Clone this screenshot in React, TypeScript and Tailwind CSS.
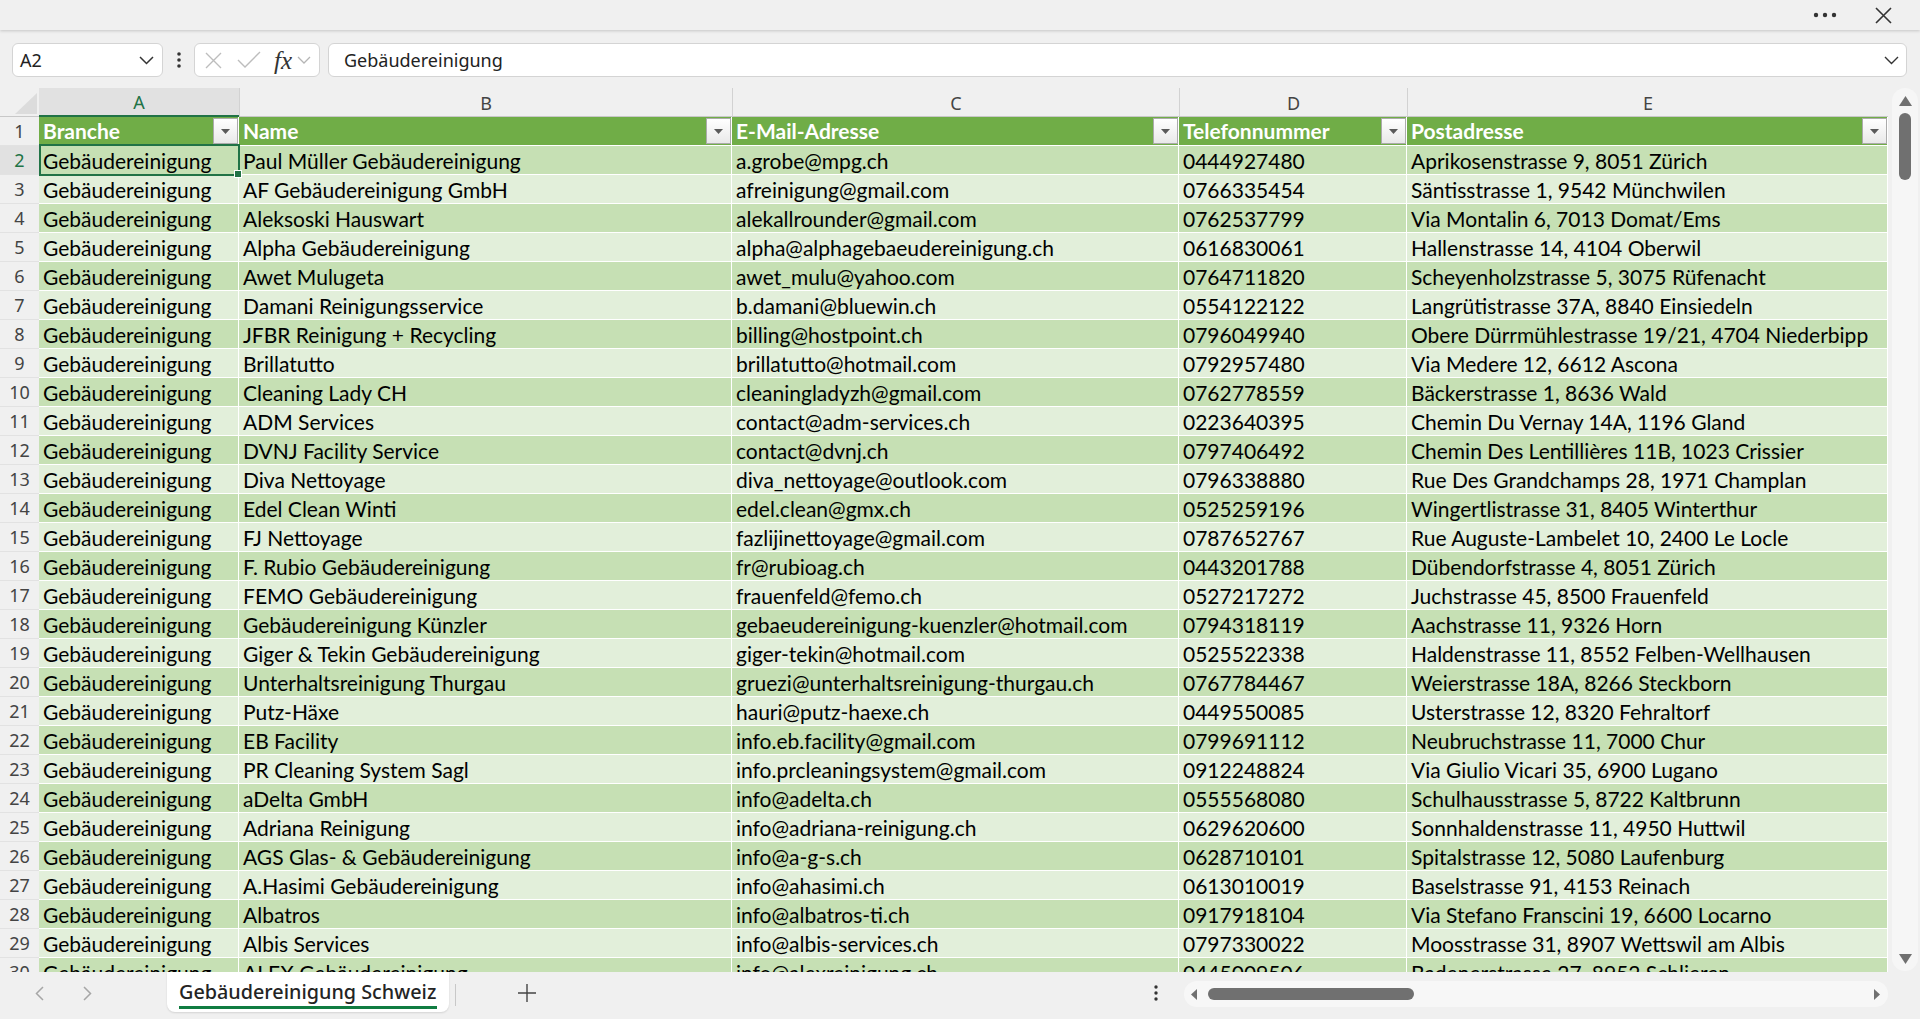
import React from "react";

const rows: [string, string, string, string][] = [
  ["Paul Müller Gebäudereinigung", "a.grobe@mpg.ch", "0444927480", "Aprikosenstrasse 9, 8051 Zürich"],
  ["AF Gebäudereinigung GmbH", "afreinigung@gmail.com", "0766335454", "Säntisstrasse 1, 9542 Münchwilen"],
  ["Aleksoski Hauswart", "alekallrounder@gmail.com", "0762537799", "Via Montalin 6, 7013 Domat/Ems"],
  ["Alpha Gebäudereinigung", "alpha@alphagebaeudereinigung.ch", "0616830061", "Hallenstrasse 14, 4104 Oberwil"],
  ["Awet Mulugeta", "awet_mulu@yahoo.com", "0764711820", "Scheyenholzstrasse 5, 3075 Rüfenacht"],
  ["Damani Reinigungsservice", "b.damani@bluewin.ch", "0554122122", "Langrütistrasse 37A, 8840 Einsiedeln"],
  ["JFBR Reinigung + Recycling", "billing@hostpoint.ch", "0796049940", "Obere Dürrmühlestrasse 19/21, 4704 Niederbipp"],
  ["Brillatutto", "brillatutto@hotmail.com", "0792957480", "Via Medere 12, 6612 Ascona"],
  ["Cleaning Lady CH", "cleaningladyzh@gmail.com", "0762778559", "Bäckerstrasse 1, 8636 Wald"],
  ["ADM Services", "contact@adm-services.ch", "0223640395", "Chemin Du Vernay 14A, 1196 Gland"],
  ["DVNJ Facility Service", "contact@dvnj.ch", "0797406492", "Chemin Des Lentillières 11B, 1023 Crissier"],
  ["Diva Nettoyage", "diva_nettoyage@outlook.com", "0796338880", "Rue Des Grandchamps 28, 1971 Champlan"],
  ["Edel Clean Winti", "edel.clean@gmx.ch", "0525259196", "Wingertlistrasse 31, 8405 Winterthur"],
  ["FJ Nettoyage", "fazlijinettoyage@gmail.com", "0787652767", "Rue Auguste-Lambelet 10, 2400 Le Locle"],
  ["F. Rubio Gebäudereinigung", "fr@rubioag.ch", "0443201788", "Dübendorfstrasse 4, 8051 Zürich"],
  ["FEMO Gebäudereinigung", "frauenfeld@femo.ch", "0527217272", "Juchstrasse 45, 8500 Frauenfeld"],
  ["Gebäudereinigung Künzler", "gebaeudereinigung-kuenzler@hotmail.com", "0794318119", "Aachstrasse 11, 9326 Horn"],
  ["Giger & Tekin Gebäudereinigung", "giger-tekin@hotmail.com", "0525522338", "Haldenstrasse 11, 8552 Felben-Wellhausen"],
  ["Unterhaltsreinigung Thurgau", "gruezi@unterhaltsreinigung-thurgau.ch", "0767784467", "Weierstrasse 18A, 8266 Steckborn"],
  ["Putz-Häxe", "hauri@putz-haexe.ch", "0449550085", "Usterstrasse 12, 8320 Fehraltorf"],
  ["EB Facility", "info.eb.facility@gmail.com", "0799691112", "Neubruchstrasse 11, 7000 Chur"],
  ["PR Cleaning System Sagl", "info.prcleaningsystem@gmail.com", "0912248824", "Via Giulio Vicari 35, 6900 Lugano"],
  ["aDelta GmbH", "info@adelta.ch", "0555568080", "Schulhausstrasse 5, 8722 Kaltbrunn"],
  ["Adriana Reinigung", "info@adriana-reinigung.ch", "0629620600", "Sonnhaldenstrasse 11, 4950 Huttwil"],
  ["AGS Glas- & Gebäudereinigung", "info@a-g-s.ch", "0628710101", "Spitalstrasse 12, 5080 Laufenburg"],
  ["A.Hasimi Gebäudereinigung", "info@ahasimi.ch", "0613010019", "Baselstrasse 91, 4153 Reinach"],
  ["Albatros", "info@albatros-ti.ch", "0917918104", "Via Stefano Franscini 19, 6600 Locarno"],
  ["Albis Services", "info@albis-services.ch", "0797330022", "Moosstrasse 31, 8907 Wettswil am Albis"],
  ["ALEX Gebäudereinigung", "info@alexreinigung.ch", "0445009506", "Badenerstrasse 27, 8952 Schlieren"],
];

const cellFont = { fontFamily: "Lato, 'Noto Sans', sans-serif" };
const uiFont = { fontFamily: "'Noto Sans', 'Open Sans', sans-serif" };

function FilterBtn() {
  return (
    <div className="absolute right-0 top-[1px] w-[25px] h-[26px] border border-[#ababab] bg-linear-to-b from-white to-[#e9e9e9] flex items-center justify-center">
      <svg width="9" height="5" viewBox="0 0 9 5">
        <path d="M0 0 H9 L4.5 5 Z" fill="#5a5a5a" />
      </svg>
    </div>
  );
}

function HeaderCell({ text }: { text: string }) {
  return (
    <div className="relative h-[29px] bg-[#70ad47] border-r border-b border-white pl-[4px] text-white font-bold text-[21px] leading-[28px] whitespace-nowrap overflow-hidden" style={cellFont}>
      {text}
      <FilterBtn />
    </div>
  );
}

export default function App() {
  const letters = ["A", "B", "C", "D", "E"];
  const heads = ["Branche", "Name", "E-Mail-Adresse", "Telefonnummer", "Postadresse"];
  return (
    <div className="w-[1920px] h-[1019px] bg-[#f0f0f0] flex flex-col overflow-hidden">
      {/* top bar */}
      <div className="h-[30px] shrink-0 bg-[#f0f0f0] flex items-center justify-end pr-[28px] shadow-[0_1px_3px_rgba(0,0,0,0.18)] relative z-10">
        <svg width="26" height="6" viewBox="0 0 26 6" className="mr-[37px]">
          <circle cx="4" cy="3" r="2.2" fill="#333" />
          <circle cx="13" cy="3" r="2.2" fill="#333" />
          <circle cx="22" cy="3" r="2.2" fill="#333" />
        </svg>
        <svg width="17" height="17" viewBox="0 0 17 17">
          <path d="M1 1 L16 16 M16 1 L1 16" stroke="#333" strokeWidth="1.6" />
        </svg>
      </div>

      {/* formula bar */}
      <div className="h-[34px] mt-[13px] shrink-0 flex items-center pl-[12px]" style={uiFont}>
        <div className="w-[151px] h-[34px] bg-white border border-[#d4d4d4] rounded-[6px] flex items-center justify-between pl-[7px] pr-[8px]">
          <span className="text-[18px] text-[#222]">A2</span>
          <svg width="15" height="9" viewBox="0 0 15 9">
            <path d="M1 1 L7.5 7.5 L14 1" stroke="#333" strokeWidth="1.5" fill="none" />
          </svg>
        </div>
        <svg width="4" height="16" viewBox="0 0 4 16" className="ml-[14px]">
          <circle cx="2" cy="2" r="1.8" fill="#333" />
          <circle cx="2" cy="8" r="1.8" fill="#333" />
          <circle cx="2" cy="14" r="1.8" fill="#333" />
        </svg>
        <div className="ml-[13px] w-[126px] h-[34px] bg-white border border-[#d4d4d4] rounded-[6px] flex items-center pl-[9px]">
          <svg width="19" height="19" viewBox="0 0 19 19">
            <path d="M2 2 L17 17 M17 2 L2 17" stroke="#bdbdbd" strokeWidth="1.4" />
          </svg>
          <svg width="24" height="18" viewBox="0 0 24 18" className="ml-[14px]">
            <path d="M1 9 L8 16 L23 1" stroke="#bdbdbd" strokeWidth="1.4" fill="none" />
          </svg>
          <span className="ml-[13px] text-[25px] italic text-[#333] leading-none" style={{ fontFamily: "'Liberation Serif', 'DejaVu Serif', serif" }}>
            fx
          </span>
          <svg width="14" height="8" viewBox="0 0 14 8" className="ml-[5px]">
            <path d="M1 1 L7 7 L13 1" stroke="#b5b5b5" strokeWidth="1.3" fill="none" />
          </svg>
        </div>
        <div className="ml-[8px] mr-[13px] flex-1 h-[34px] bg-white border border-[#d4d4d4] rounded-[6px] flex items-center justify-between pl-[15px] pr-[7px]">
          <span className="text-[18px] text-[#222]">Gebäudereinigung</span>
          <svg width="15" height="9" viewBox="0 0 15 9">
            <path d="M1 1 L7.5 7.5 L14 1" stroke="#333" strokeWidth="1.4" fill="none" />
          </svg>
        </div>
      </div>

      {/* grid area */}
      <div className="mt-[11px] flex-1 min-h-0 flex">
        <div className="relative w-[1888px] overflow-hidden">
          <div className="grid grid-cols-[39px_200px_493px_447px_228px_481px]">
            {/* column header row */}
            <div className="relative h-[29px] border-b border-[#c8c8c8]">
              <svg width="22" height="21" viewBox="0 0 22 21" className="absolute left-[15px] top-[5px]">
                <path d="M22 0 L22 21 L0 21 Z" fill="#dcdcdc" />
              </svg>
            </div>
            {letters.map((l, i) => (
              <div
                key={l}
                className={
                  i === 0
                    ? "h-[29px] bg-[#e1e1e1] border-b-2 border-[#217346] flex items-center justify-center text-[18px] text-[#217346] pt-[2px]"
                    : "h-[29px] border-b border-l border-[#d2d2d2] border-b-[#c8c8c8] flex items-center justify-center text-[18px] text-[#444] pt-[2px]"
                }
                style={uiFont}
              >
                {l}
              </div>
            ))}

            {/* row 1 */}
            <div className="h-[29px] border-b border-[#e2e2e2] flex items-center justify-center text-[18px] text-[#444]" style={uiFont}>
              1
            </div>
            {heads.map((h) => (
              <HeaderCell key={h} text={h} />
            ))}

            {rows.map((r, idx) => {
              const n = idx + 2;
              const bg = idx % 2 === 0 ? "bg-[#c6e0b4]" : "bg-[#e2efda]";
              const sel = n === 2;
              const cells = ["Gebäudereinigung", ...r];
              return (
                <React.Fragment key={n}>
                  <div
                    className={
                      sel
                        ? "h-[29px] bg-[#e1e1e1] border-b border-[#e2e2e2] flex items-center justify-center text-[18px] text-[#217346]"
                        : "h-[29px] border-b border-[#e2e2e2] flex items-center justify-center text-[18px] text-[#444]"
                    }
                    style={uiFont}
                  >
                    {n}
                  </div>
                  {cells.map((c, ci) => (
                    <div
                      key={ci}
                      className={`h-[29px] ${bg} border-r border-b border-white pl-[4px] pt-[1px] text-[21px] leading-[27px] text-black whitespace-nowrap overflow-hidden`}
                      style={cellFont}
                    >
                      {c}
                    </div>
                  ))}
                </React.Fragment>
              );
            })}
          </div>
          {/* selection */}
          <div className="absolute left-[39px] top-[56px] w-[201px] h-[32px] border-2 border-[#217346] pointer-events-none" />
          <div className="absolute left-[234px] top-[82px] w-[8px] h-[8px] bg-[#217346] border border-white" />
        </div>
        {/* vertical scrollbar */}
        <div className="ml-[4px] w-[26px] h-[883px] rounded-full bg-[#f6f6f6] flex flex-col items-center pt-[8px] pb-[7px]">
          <svg width="13" height="10" viewBox="0 0 13 10">
            <path d="M6.5 0 L13 10 H0 Z" fill="#707070" />
          </svg>
          <div className="mt-[7px] w-[12px] h-[67px] rounded-full bg-[#707070]" />
          <div className="flex-1" />
          <svg width="13" height="10" viewBox="0 0 13 10">
            <path d="M0 0 H13 L6.5 10 Z" fill="#707070" />
          </svg>
        </div>
      </div>

      {/* bottom bar */}
      <div className="h-[47px] shrink-0 flex items-start" style={uiFont}>
        <div className="w-[167px] h-[42px] flex items-center pl-[35px]">
          <svg width="9" height="15" viewBox="0 0 9 15">
            <path d="M8 1 L1.5 7.5 L8 14" stroke="#a6a6a6" strokeWidth="1.5" fill="none" />
          </svg>
          <svg width="9" height="15" viewBox="0 0 9 15" className="ml-[39px]">
            <path d="M1 1 L7.5 7.5 L1 14" stroke="#a6a6a6" strokeWidth="1.5" fill="none" />
          </svg>
        </div>
        <div className="w-[282px] h-[40px] bg-white rounded-b-[8px] shadow-[0_1px_2px_rgba(0,0,0,0.12)] px-[12px] flex flex-col">
          <span className="text-[19.8px] leading-[26px] mt-[7px] text-[#242424] font-medium whitespace-nowrap">Gebäudereinigung Schweiz</span>
          <div className="h-[3px] bg-[#107c41] mt-[1px] w-[258px]" />
        </div>
        <div className="ml-[6px] mt-[12px] w-px h-[22px] bg-[#c8c8c8]" />
        <svg width="20" height="20" viewBox="0 0 20 20" className="ml-[61px] mt-[11px]">
          <path d="M10 1 V19 M1 10 H19" stroke="#444" strokeWidth="1.4" />
        </svg>
        <div className="flex-1" />
        <svg width="4" height="16" viewBox="0 0 4 16" className="mt-[13px]">
          <circle cx="2" cy="2" r="1.7" fill="#333" />
          <circle cx="2" cy="8" r="1.7" fill="#333" />
          <circle cx="2" cy="14" r="1.7" fill="#333" />
        </svg>
        <div className="ml-[26px] mr-[32px] mt-[9px] w-[704px] h-[26px] rounded-full bg-[#f7f7f7] flex items-center pl-[7px] pr-[8px]">
          <svg width="6" height="11" viewBox="0 0 6 11">
            <path d="M6 0 V11 L0 5.5 Z" fill="#707070" />
          </svg>
          <div className="ml-[11px] w-[206px] h-[12px] rounded-full bg-[#707070]" />
          <div className="flex-1" />
          <svg width="6" height="11" viewBox="0 0 6 11">
            <path d="M0 0 V11 L6 5.5 Z" fill="#707070" />
          </svg>
        </div>
      </div>
    </div>
  );
}
